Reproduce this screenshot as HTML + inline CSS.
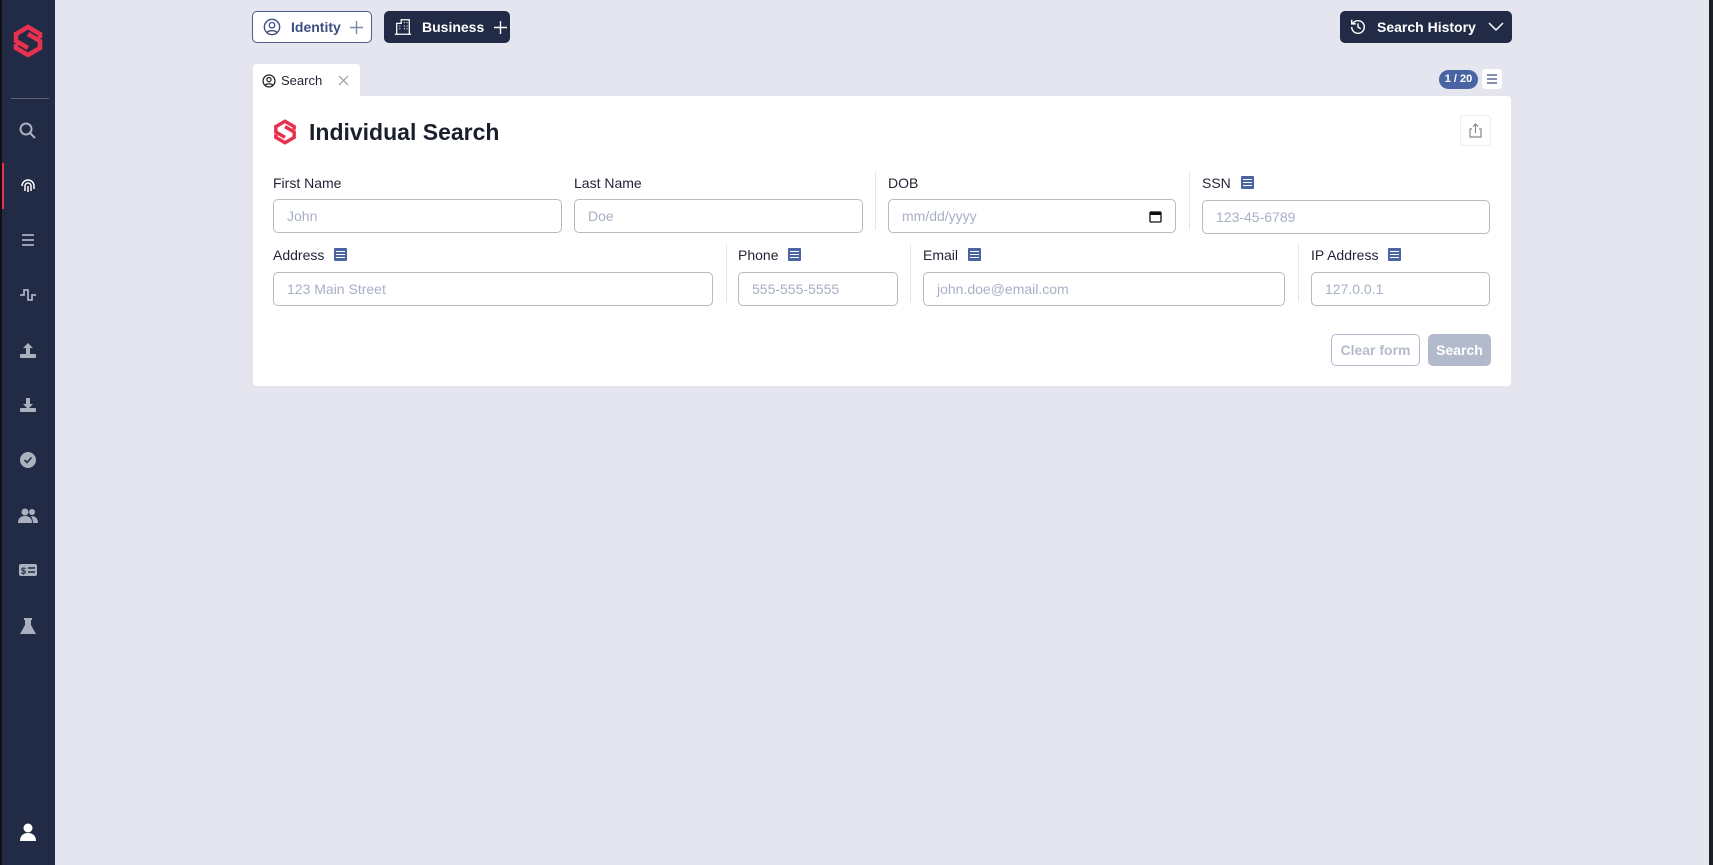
<!DOCTYPE html>
<html><head><meta charset="utf-8"><style>
*{box-sizing:border-box;margin:0;padding:0}
body{width:1713px;height:865px;background:#e4e5ee;font-family:"Liberation Sans",sans-serif;position:relative;overflow:hidden}
.side{position:absolute;left:0;top:0;width:55px;height:865px;background:#222b45;border-left:2px solid #111}
.side .ic{position:absolute;left:16px;width:20px;height:20px}
.abs{position:absolute}
.btn{position:absolute;top:11px;height:32px;border-radius:5px;font-size:14px;font-weight:bold;display:flex;align-items:center;white-space:nowrap}
.card{position:absolute;left:253px;top:96px;width:1258px;height:290px;background:#fff;border-radius:0 4px 4px 4px}
.lbl{position:absolute;font-size:14px;color:#1f2433}
.inp{position:absolute;height:34px;border:1px solid #b8bac2;border-radius:5px;font-size:14px;color:#a7b0c4;padding:0 13px;display:flex;align-items:center}
.div{position:absolute;width:1px;background:#e5e6ea}
.li{display:inline-block;width:13px;height:13px;background:#4a63a3;border-radius:1px;vertical-align:-1px;margin-left:10px;position:relative}
.li:after{content:"";position:absolute;left:2px;top:3px;width:9px;height:1px;background:#fff;box-shadow:0 3px 0 #fff,0 6px 0 #fff}
</style></head><body>
<svg width="0" height="0" style="position:absolute"><defs><g id="logo" fill="none" stroke="#e8304f" stroke-width="4.5" stroke-linejoin="miter"><path d="M29 15 V11 L17 4 L5 11 V18 L17 25"/><path d="M5 21 V25 L17 32 L29 25 V18 L17 11"/></g></defs></svg>
<div class="side">
<svg class="abs" style="left:9px;top:23px" width="34" height="36" viewBox="0 0 34 36"><use href="#logo"/></svg>
<div class="abs" style="left:9px;top:98px;width:38px;height:1px;background:#5b6479"></div>
<div class="abs" style="left:0;top:163px;width:2px;height:46px;background:#e8304f"></div>
<svg class="ic" style="top:121px" viewBox="0 0 20 20"><circle cx="8" cy="8" r="5.5" stroke="#aab0bd" stroke-width="2" fill="none"/><path d="M12 12l5 5" stroke="#aab0bd" stroke-width="2"/></svg>
<svg class="ic" style="top:176px" viewBox="0 0 20 20" fill="none" stroke="#fff" stroke-width="1.5"><path d="M4 10a6 6 0 0112 0v3M7 15v-5a3 3 0 016 0v5M10 10v6"/></svg>
<svg class="ic" style="top:230px" viewBox="0 0 20 20" stroke="#aab0bd" stroke-width="1.8"><path d="M4 5h12M4 10h12M4 15h12"/></svg>
<svg class="ic" style="top:285px" viewBox="0 0 20 20" fill="none" stroke="#aab0bd" stroke-width="1.8"><path d="M2 10h4V5h4v10h4v-5h4"/></svg>
<svg class="ic" style="top:341px" viewBox="0 0 20 20" fill="#aab0bd"><path d="M10 2l-5 5h3v6h4V7h3z"/><rect x="2" y="13" width="16" height="4" rx="1"/></svg>
<svg class="ic" style="top:395px" viewBox="0 0 20 20" fill="#aab0bd"><path d="M10 14l-5-5h3V3h4v6h3z"/><rect x="2" y="13" width="16" height="4" rx="1"/></svg>
<svg class="ic" style="top:450px" viewBox="0 0 20 20"><circle cx="10" cy="10" r="8" fill="#aab0bd"/><path d="M6.5 10l2.5 2.5 4.5-5" stroke="#222b45" stroke-width="1.6" fill="none"/></svg>
<svg class="ic" style="top:506px" viewBox="0 0 20 20" fill="#aab0bd"><circle cx="7" cy="6" r="3.5"/><circle cx="14" cy="6" r="3"/><path d="M0 17c0-5 3-7 7-7s7 2 7 7z"/><path d="M13 10c4 0 7 2 7 7h-5c0-3-1-5-2-7z"/></svg>
<svg class="ic" style="top:560px" viewBox="0 0 20 20"><rect x="1" y="4" width="18" height="12" rx="2" fill="#aab0bd"/><text x="3" y="14" font-size="9" font-weight="bold" fill="#222b45" font-family="Liberation Sans">$</text><path d="M10 8h7M10 12h7" stroke="#222b45" stroke-width="1.5"/></svg>
<svg class="ic" style="top:616px" viewBox="0 0 20 20" fill="#aab0bd"><path d="M6 2h8v2h-1v5l5 9H2l5-9V4H6z"/></svg>
<svg class="ic" style="top:822px" viewBox="0 0 20 20" fill="#fff"><circle cx="10" cy="6" r="4.5"/><path d="M2 19c0-5 3-8 8-8s8 3 8 8z"/></svg>
</div>
<div class="abs" style="left:1709px;top:0;width:4px;height:865px;background:#1d1f25"></div>

<div class="btn" style="left:252px;width:120px;background:#fff;border:1px solid #4a5d8f;color:#3d4f80">
<svg style="margin-left:10px" width="18" height="18" viewBox="0 0 20 20" fill="none" stroke="#3d4f80" stroke-width="1.5"><circle cx="10" cy="10" r="8.5"/><circle cx="10" cy="8" r="3"/><path d="M4.5 16c1.5-2.5 9.5-2.5 11 0"/></svg>
<span style="margin-left:10px">Identity</span><svg style="margin-left:9px" width="13" height="13" viewBox="0 0 13 13" stroke="#7d88a8" stroke-width="1.4"><path d="M6.5 0v13M0 6.5h13"/></svg></div>
<div class="btn" style="left:384px;width:126px;background:#222b45;color:#fff">
<svg style="margin-left:10px" width="18" height="18" viewBox="0 0 20 20" fill="none" stroke="#fff" stroke-width="1.4"><path d="M3 18V6h5V2h9v16zM1 18h18M6 9h1M6 12h1M11 5h1M14 5h1M11 9h1M14 9h1M11 12h1M14 12h1"/></svg>
<span style="margin-left:10px">Business</span><svg style="margin-left:10px" width="13" height="13" viewBox="0 0 13 13" stroke="#fff" stroke-width="1.4"><path d="M6.5 0v13M0 6.5h13"/></svg></div>
<div class="btn" style="left:1340px;width:172px;background:#222b45;color:#fff">
<svg style="margin-left:9px" width="18" height="18" viewBox="0 0 20 20" fill="none" stroke="#fff" stroke-width="1.6"><path d="M3 10a7 7 0 107-7 7 7 0 00-6 3.5M3 2v4.5h4.5M10 6v4l3 2"/></svg>
<span style="margin-left:10px">Search History</span>
<svg style="margin-left:12px" width="16" height="10" viewBox="0 0 16 10" fill="none" stroke="#fff" stroke-width="1.5"><path d="M1 1l7 7 7-7"/></svg></div>

<div class="abs" style="left:253px;top:64px;width:107px;height:33px;background:#fff;border-radius:4px 4px 0 0;font-size:13px;color:#1f2433;display:flex;align-items:center">
<svg style="margin-left:9px" width="14" height="14" viewBox="0 0 20 20" fill="none" stroke="#222" stroke-width="1.8"><circle cx="10" cy="10" r="8.5"/><circle cx="10" cy="8" r="3"/><path d="M4.5 16c1.5-2.5 9.5-2.5 11 0"/></svg>
<span style="margin-left:5px">Search</span>
<svg style="margin-left:16px" width="11" height="11" viewBox="0 0 11 11" stroke="#999" stroke-width="1.2"><path d="M1 1l9 9M10 1l-9 9"/></svg></div>
<div class="abs" style="left:1439px;top:70px;width:39px;height:19px;background:#4a63a3;border-radius:10px;color:#fff;font-size:11px;font-weight:bold;text-align:center;line-height:19px">1 / 20</div>
<div class="abs" style="left:1482px;top:69px;width:20px;height:20px;background:#fff;border-radius:3px"><svg width="20" height="20" viewBox="0 0 20 20" stroke="#3d4f80" stroke-width="1.3"><path d="M5 6h10M5 10h10M5 14h10"/></svg></div>

<div class="card">
<svg class="abs" style="left:19px;top:22px" width="26" height="28" viewBox="0 0 34 36"><use href="#logo"/></svg>
<div class="abs" style="left:56px;top:23px;font-size:23px;font-weight:bold;color:#1a1f2c">Individual Search</div>
<div class="abs" style="left:1207px;top:19px;width:31px;height:31px;border:1px solid #eceef2;border-radius:4px"><svg width="29" height="29" viewBox="0 0 29 29" fill="none" stroke="#888" stroke-width="1.2"><path d="M11 13h-2v8h11v-8h-2M14.5 17V8M12 10.5l2.5-2.5 2.5 2.5"/></svg></div>

<div class="lbl" style="left:20px;top:79px">First Name</div>
<div class="inp" style="left:20px;top:103px;width:289px">John</div>
<div class="lbl" style="left:321px;top:79px">Last Name</div>
<div class="inp" style="left:321px;top:103px;width:289px">Doe</div>
<div class="div" style="left:622px;top:76px;height:58px"></div>
<div class="lbl" style="left:635px;top:79px">DOB</div>
<div class="inp" style="left:635px;top:103px;width:288px;justify-content:space-between"><span>mm/dd/yyyy</span><svg width="13" height="13" viewBox="0 0 13 13"><rect x="1" y="2" width="11" height="10" rx="1" fill="none" stroke="#111" stroke-width="1.3"/><rect x="1" y="2" width="11" height="3" fill="#111"/></svg></div>
<div class="div" style="left:936px;top:76px;height:58px"></div>
<div class="lbl" style="left:949px;top:79px">SSN<span class="li"></span></div>
<div class="inp" style="left:949px;top:104px;width:288px">123-45-6789</div>

<div class="lbl" style="left:20px;top:151px">Address<span class="li"></span></div>
<div class="inp" style="left:20px;top:176px;width:440px">123 Main Street</div>
<div class="div" style="left:473px;top:148px;height:58px"></div>
<div class="lbl" style="left:485px;top:151px">Phone<span class="li"></span></div>
<div class="inp" style="left:485px;top:176px;width:160px">555-555-5555</div>
<div class="div" style="left:657px;top:148px;height:58px"></div>
<div class="lbl" style="left:670px;top:151px">Email<span class="li"></span></div>
<div class="inp" style="left:670px;top:176px;width:362px">john.doe@email.com</div>
<div class="div" style="left:1045px;top:148px;height:58px"></div>
<div class="lbl" style="left:1058px;top:151px">IP Address<span class="li"></span></div>
<div class="inp" style="left:1058px;top:176px;width:179px">127.0.0.1</div>

<div class="abs" style="left:1078px;top:238px;width:89px;height:32px;border:1px solid #b3bacb;border-radius:5px;color:#b3bacb;font-size:14px;font-weight:bold;text-align:center;line-height:30px">Clear form</div>
<div class="abs" style="left:1175px;top:238px;width:63px;height:32px;background:#b3bacb;border-radius:5px;color:#fff;font-size:14px;font-weight:bold;text-align:center;line-height:32px">Search</div>
</div>
</body></html>
